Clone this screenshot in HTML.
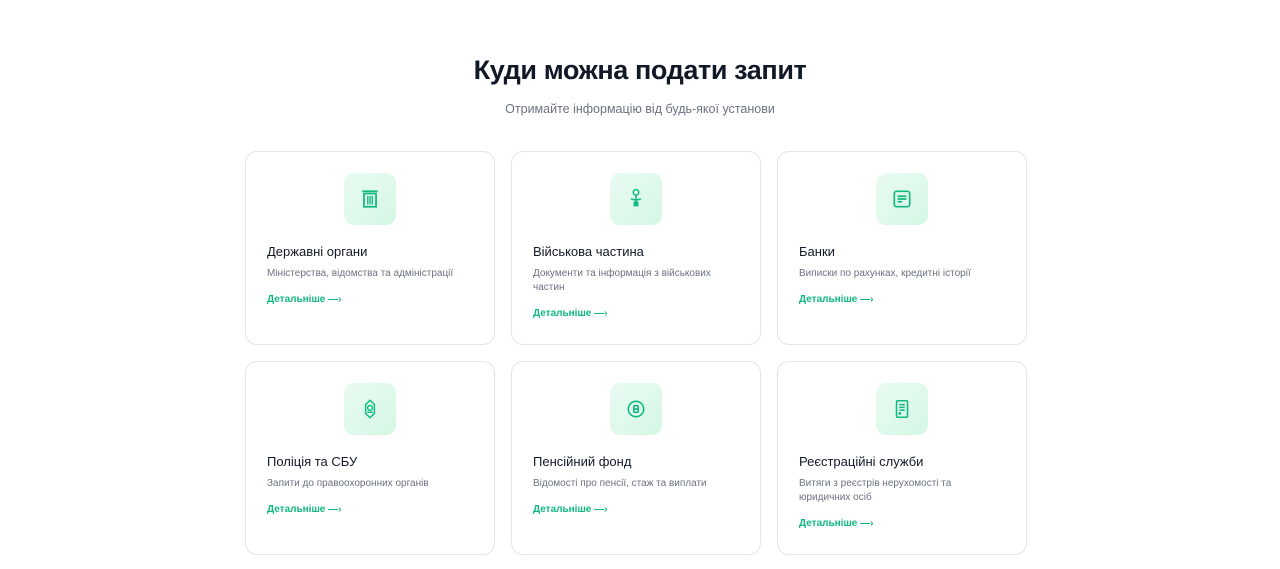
<!DOCTYPE html>
<html><head><meta charset="utf-8"><style>
*{margin:0;padding:0;box-sizing:border-box}
body{width:1280px;height:569px;background:#fff;font-family:"Liberation Sans",sans-serif;overflow:hidden;position:relative}
h1{position:absolute;top:55px;left:0;width:1280px;text-align:center;font-size:27px;font-weight:700;color:#111827;letter-spacing:-0.4px}
.sub{position:absolute;top:102px;left:0;width:1280px;text-align:center;font-size:12.5px;color:#6b7280}
.card{position:absolute;width:250px;height:194px;border:1px solid #e3e5e8;border-radius:12px;background:#fff}
.ic{position:absolute;left:98px;top:21px;width:52px;height:52px;border-radius:10px;background:linear-gradient(135deg,#e9fbf1,#d5f7e5);display:flex;align-items:center;justify-content:center}
.t{position:absolute;left:21px;top:92px;font-size:13px;font-weight:500;color:#111827}
.d{position:absolute;left:21px;top:115px;width:200px;font-size:10px;line-height:14px;color:#6b7280}
.l{position:absolute;left:21px;font-size:10px;font-weight:700;color:#10b981}
</style></head><body>
<h1>Куди можна подати запит</h1>
<div class="sub">Отримайте інформацію від будь-якої установи</div>

<div class="card" style="left:245px;top:151px">
<div class="ic"><svg width="22" height="22" viewBox="0 0 20 20" fill="none" stroke="#10b981" stroke-width="1.6"><path d="M3 3h14M4.5 5h11v12h-11z"/><path d="M8 7v8M10 7v8M12 7v8" stroke-width="1.2"/></svg></div>
<div class="t">Державні органи</div><div class="d">Міністерства, відомства та адміністрації</div><div class="l" style="top:142px">Детальніше —›</div></div>

<div class="card" style="left:511px;top:151px">
<div class="ic"><svg width="22" height="22" viewBox="0 0 20 20" fill="none" stroke="#10b981" stroke-width="1.4"><circle cx="10" cy="4" r="2.5"/><path d="M10 6.5v7M5.5 10l4.5 1 4.5-1"/><rect x="8.5" y="13" width="3" height="3" fill="#10b981"/></svg></div>
<div class="t">Військова частина</div><div class="d">Документи та інформація з військових частин</div><div class="l" style="top:156px">Детальніше —›</div></div>

<div class="card" style="left:777px;top:151px">
<div class="ic"><svg width="22" height="22" viewBox="0 0 20 20" fill="none" stroke="#10b981" stroke-width="1.5"><rect x="3" y="3" width="14" height="14" rx="2"/><path d="M6 7.5h8M6 10h8M6 12.5h4"/></svg></div>
<div class="t">Банки</div><div class="d">Виписки по рахунках, кредитні історії</div><div class="l" style="top:142px">Детальніше —›</div></div>

<div class="card" style="left:245px;top:361px">
<div class="ic"><svg width="22" height="22" viewBox="0 0 20 20" fill="none" stroke="#10b981" stroke-width="1.3"><path d="M10 2l4 4v8l-4 4-4-4V6z"/><circle cx="10" cy="9" r="2.2"/><path d="M7.5 13h5"/></svg></div>
<div class="t">Поліція та СБУ</div><div class="d">Запити до правоохоронних органів</div><div class="l" style="top:142px">Детальніше —›</div></div>

<div class="card" style="left:511px;top:361px">
<div class="ic"><svg width="22" height="22" viewBox="0 0 20 20" fill="none" stroke="#10b981" stroke-width="1.4"><circle cx="10" cy="10" r="7"/><rect x="8" y="7" width="4" height="6" rx="1"/><path d="M8 10h4"/></svg></div>
<div class="t">Пенсійний фонд</div><div class="d">Відомості про пенсії, стаж та виплати</div><div class="l" style="top:142px">Детальніше —›</div></div>

<div class="card" style="left:777px;top:361px">
<div class="ic"><svg width="22" height="22" viewBox="0 0 20 20" fill="none" stroke="#10b981" stroke-width="1.4"><rect x="5" y="2.5" width="10" height="15" rx="1"/><path d="M7.5 6h5M7.5 8.5h5M7.5 11h5"/><circle cx="8" cy="14" r=".6" fill="#10b981"/></svg></div>
<div class="t">Реєстраційні служби</div><div class="d">Витяги з реєстрів нерухомості та юридичних осіб</div><div class="l" style="top:156px">Детальніше —›</div></div>
</body></html>
